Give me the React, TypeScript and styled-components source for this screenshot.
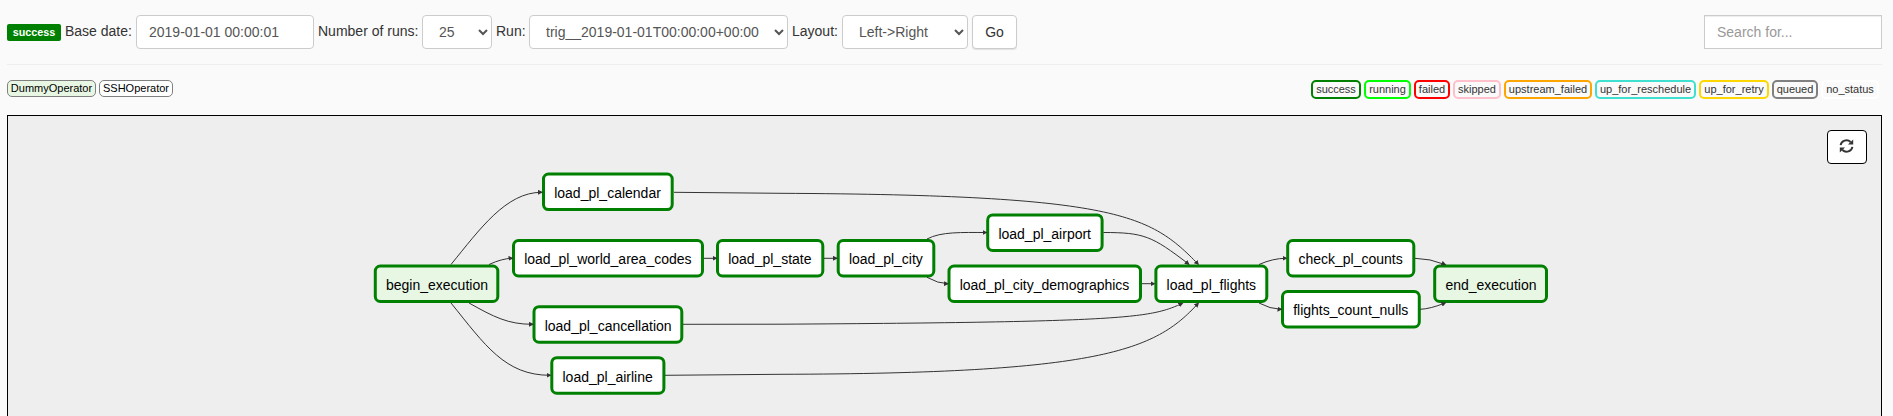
import React from "react";
import styled, { createGlobalStyle } from "styled-components";

const Global = createGlobalStyle`
  * { box-sizing: border-box; }
  html, body { margin: 0; height: 100%; overflow: hidden; }
  body {
    background: #fafafa;
    color: #333;
    font: 14px/20px "Liberation Sans", Arial, sans-serif;
  }
  #root { height: 100%; }
`;

const Page = styled.main`
  display: flex;
  flex-direction: column;
  height: 416px;
  padding: 15px 11px 0 7px;
`;

const Toolbar = styled.div`
  display: flex;
  justify-content: space-between;
  height: 50px;
  border-bottom: 1px solid #eee;
`;

const Form = styled.form`
  display: flex;
  align-items: center;
  gap: 4px;
  height: 34px;
`;

const Badge = styled.span`
  width: 54px;
  height: 17px;
  margin-top: 1px;
  border-radius: 2px;
  background: #008000;
  color: #fff;
  font-size: 10.8px;
  font-weight: bold;
  line-height: 17px;
  text-align: center;
`;

const Label = styled.label<{ $w: number }>`
  flex: none;
  width: ${(p) => p.$w}px;
  margin-top: -2px;
  white-space: nowrap;
`;

const Input = styled.input<{ $w: number; $square?: boolean }>`
  width: ${(p) => p.$w}px;
  height: 34px;
  padding: 6px 12px;
  border: 1px solid #ccc;
  border-radius: ${(p) => (p.$square ? 0 : 4)}px;
  background: #fff;
  box-shadow: ${(p) => (p.$square ? "inset 0 1px 1px rgba(0, 0, 0, 0.075)" : "none")};
  color: #555;
  font: inherit;
  &::placeholder { color: #999; }
`;

const Select = styled.select<{ $w: number }>`
  width: ${(p) => p.$w}px;
  height: 34px;
  padding: 6px 12px;
  border: 1px solid #ccc;
  border-radius: 4px;
  background-color: #fff;
  color: #555;
  font: inherit;
`;

const GoButton = styled.button`
  width: 45px;
  height: 34px;
  padding: 0;
  border: 1px solid #ccc;
  border-radius: 4px;
  background: #fff;
  box-shadow: 0 1px 1px rgba(0, 0, 0, 0.1);
  color: #333;
  font: inherit;
`;

const Legends = styled.div`
  display: flex;
  justify-content: space-between;
  height: 50px;
  padding: 15px 3px 0 0;
`;

const LegendGroup = styled.div`
  display: flex;
  align-items: flex-start;
  gap: 3px;
`;

const Operator = styled.span<{ $bg: string; $w: number }>`
  width: ${(p) => p.$w}px;
  height: 17px;
  border: 1px solid #808080;
  border-radius: 5px;
  background: ${(p) => p.$bg};
  color: #000;
  font-size: 11px;
  line-height: 15px;
  text-align: center;
`;

const State = styled.span<{ $color: string; $w: number }>`
  width: ${(p) => p.$w}px;
  height: 19px;
  border: 2px solid ${(p) => p.$color};
  border-radius: 5px;
  font-size: 11px;
  line-height: 15px;
  text-align: center;
  white-space: nowrap;
`;

const Canvas = styled.section`
  position: relative;
  flex: 1;
  border: 1px solid #000;
  border-bottom: 0;
  background: #eee;
  overflow: hidden;
`;

const Graph = styled.svg`
  display: block;
  width: 1874px;
  height: 300px;
`;

const NodeBox = styled.rect`
  stroke: #008000;
  stroke-width: 3px;
`;

const NodeText = styled.text`
  fill: #000;
  font: 14px "Liberation Sans", Arial, sans-serif;
`;

const Edge = styled.path`
  fill: none;
  stroke: #333;
  stroke-width: 1px;
`;

const Refresh = styled.button`
  position: absolute;
  top: 14px;
  right: 14px;
  display: flex;
  align-items: center;
  justify-content: center;
  width: 40px;
  height: 34px;
  padding: 0 1px 2px 0;
  border: 1px solid #000;
  border-radius: 4px;
  background: #fff;
  color: #333;
`;

const states: [string, string, number][] = [
  ["success", "#008000", 50],
  ["running", "#00ff00", 47],
  ["failed", "#ff0000", 36],
  ["skipped", "#ffc0cb", 48],
  ["upstream_failed", "#ffa500", 88],
  ["up_for_reschedule", "#40e0d0", 101],
  ["up_for_retry", "#ffd700", 70],
  ["queued", "#808080", 46],
  ["no_status", "#ffffff", 58],
];

// label, left, right, top
const nodes: [string, number, number, number][] = [
  ["begin_execution", 373.8, 499.3, 264.5],
  ["load_pl_calendar", 542, 673.7, 172.6],
  ["load_pl_world_area_codes", 512, 704, 239],
  ["load_pl_state", 716, 824.3, 239],
  ["load_pl_city", 836.7, 935.3, 239],
  ["load_pl_cancellation", 532.5, 683.3, 305.2],
  ["load_pl_airline", 550.3, 665.4, 356.2],
  ["load_pl_airport", 986.2, 1103.6, 213.4],
  ["load_pl_city_demographics", 947.5, 1142, 264.5],
  ["load_pl_flights", 1154.4, 1268.3, 264.5],
  ["check_pl_counts", 1286.2, 1415.3, 239],
  ["flights_count_nulls", 1281, 1420.8, 290],
  ["end_execution", 1433.2, 1548, 264.5],
];

const edges = [
  "M451 264.5C480 229 506 192.3 541.5 192.3",
  "M489 264.5Q502 258.5 512 258.3",
  "M469 303C494 317 508 324.3 532.5 324.3",
  "M451 303C485 345 505 375.3 550 375.3",
  "M704 258.3H716",
  "M824 258.3H836.5",
  "M927 239C941 231.5 962 232.5 986 232.5",
  "M927 277.3Q938 283.5 947.5 283.7",
  "M1142 283.7H1154",
  "M674 192.3L780 193.3C1120 195 1150 215 1198 264",
  "M1103.5 232.5C1144 232.5 1152 236 1188.5 264",
  "M683 324.3L780 324.2C1130 322 1150 318 1182 303.5",
  "M665 375.3L780 374.3C1100 373.5 1155 351 1198 303.5",
  "M1259 264.5Q1273 258.3 1286 258.3",
  "M1259 303Q1270 309 1281 309.3",
  "M1415 258.3Q1430 258.5 1445 264.5",
  "M1420 309.3Q1430 309 1445 303",
];

export default function App() {
  return (
    <Page>
      <Global />
      <Toolbar>
        <Form>
          <Badge>success</Badge>
          <Label $w={67}>Base date:</Label>
          <Input $w={178} defaultValue="2019-01-01 00:00:01" />
          <Label $w={100}>Number of runs:</Label>
          <Select $w={70}><option>25</option></Select>
          <Label $w={29}>Run:</Label>
          <Select $w={259}><option>trig__2019-01-01T00:00:00+00:00</option></Select>
          <Label $w={46}>Layout:</Label>
          <Select $w={126}><option>{"Left->Right"}</option></Select>
          <GoButton type="button">Go</GoButton>
        </Form>
        <Input $w={178} $square placeholder="Search for..." />
      </Toolbar>
      <Legends>
        <LegendGroup>
          <Operator $bg="#e8f7e4" $w={89}>DummyOperator</Operator>
          <Operator $bg="#fff" $w={74}>SSHOperator</Operator>
        </LegendGroup>
        <LegendGroup>
          {states.map(([name, color, w]) => (
            <State key={name} $color={color} $w={w}>{name}</State>
          ))}
        </LegendGroup>
      </Legends>
      <Canvas>
        <Graph viewBox="8 116 1874 300">
          <defs>
            <marker id="arrow" viewBox="0 0 10 10" refX="7" refY="5" markerWidth="5" markerHeight="5" markerUnits="userSpaceOnUse" orient="auto">
              <path d="M0 0L10 5L0 10Z" fill="#333" />
            </marker>
          </defs>
          {nodes.map(([label, l, r, t]) => (
            <g key={label}>
              <NodeBox
                x={l + 1.5} y={t + 1.5} width={r - l - 3} height={35.5} rx={5}
                fill={label.endsWith("_execution") ? "#e8f7e4" : "#fff"}
              />
              <NodeText x={l + 12.2} y={Math.round(t + 25.3)}>{label}</NodeText>
            </g>
          ))}
          {edges.map((d) => <Edge key={d} d={d} markerEnd="url(#arrow)" />)}
        </Graph>
        <Refresh type="button" aria-label="Refresh">
          <svg width="15" height="14" viewBox="0 0 15 14">
            <g fill="none" stroke="currentColor" strokeWidth="1.9">
              <path d="M1.6 6.2A5.9 5.6 0 0 1 11.6 3" />
              <path d="M13.4 7.8A5.9 5.6 0 0 1 3.4 11" />
            </g>
            <path d="M14.2 0.4V5.6H9Z" fill="currentColor" />
            <path d="M0.8 13.6V8.4H6Z" fill="currentColor" />
          </svg>
        </Refresh>
      </Canvas>
    </Page>
  );
}
